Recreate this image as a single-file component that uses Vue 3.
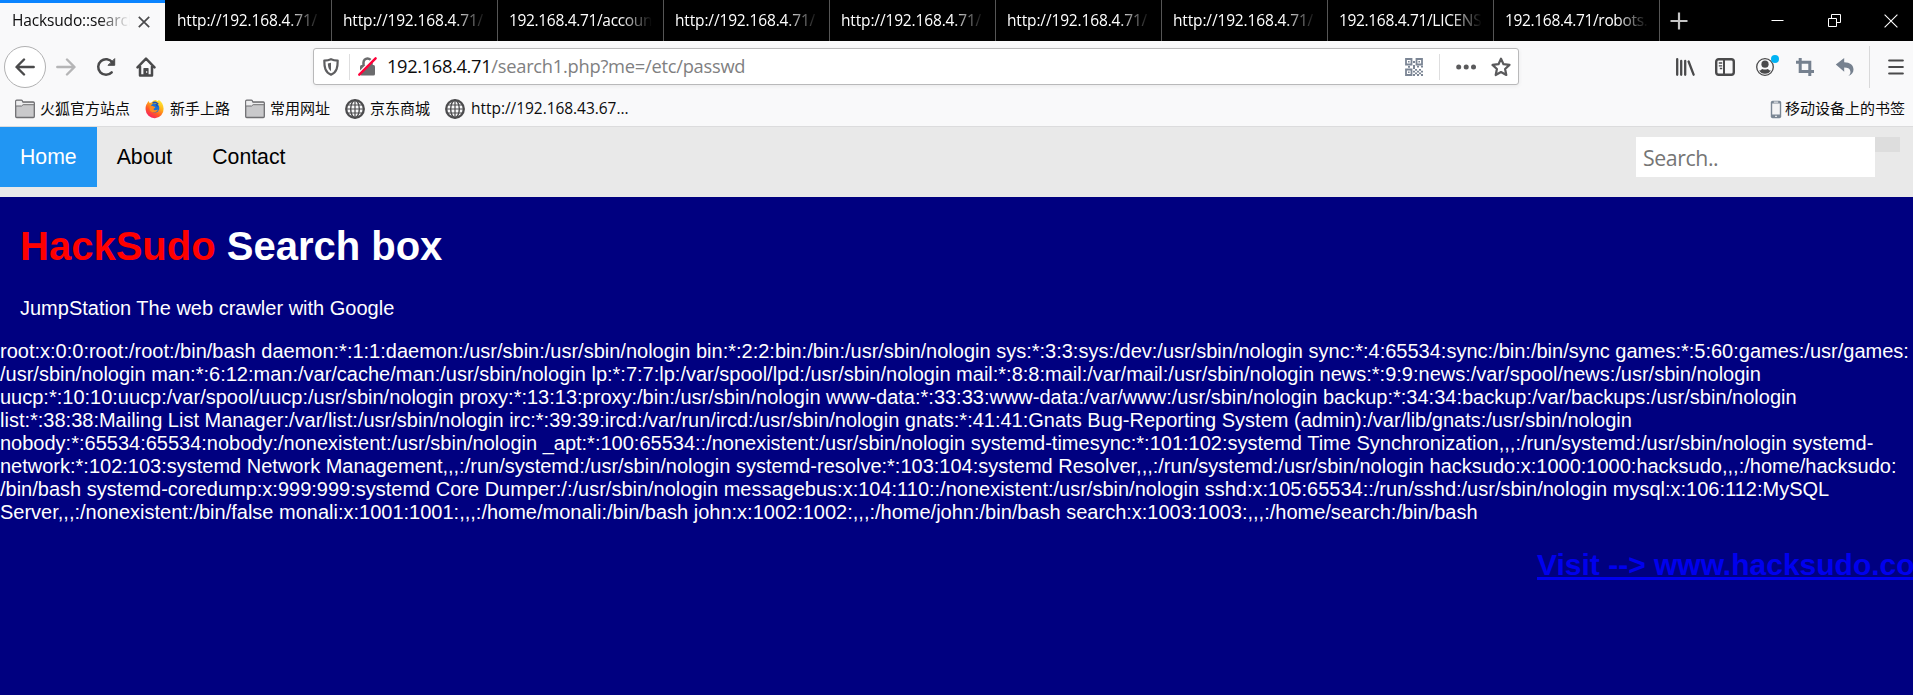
<script setup>
const tabs = [
  'http://192.168.4.71/',
  'http://192.168.4.71/',
  '192.168.4.71/account',
  'http://192.168.4.71/',
  'http://192.168.4.71/',
  'http://192.168.4.71/',
  'http://192.168.4.71/',
  '192.168.4.71/LICENSE',
  '192.168.4.71/robots.txt',
]

const bookmarks = [
  { icon: 'folder', label: '火狐官方站点' },
  { icon: 'firefox', label: '新手上路' },
  { icon: 'folder', label: '常用网址' },
  { icon: 'globe', label: '京东商城' },
  { icon: 'globe', label: 'http://192.168.43.67...', latin: true },
]

const lines = [
  'root:x:0:0:root:/root:/bin/bash daemon:*:1:1:daemon:/usr/sbin:/usr/sbin/nologin bin:*:2:2:bin:/bin:/usr/sbin/nologin sys:*:3:3:sys:/dev:/usr/sbin/nologin sync:*:4:65534:sync:/bin:/bin/sync games:*:5:60:games:/usr/games:',
  '/usr/sbin/nologin man:*:6:12:man:/var/cache/man:/usr/sbin/nologin lp:*:7:7:lp:/var/spool/lpd:/usr/sbin/nologin mail:*:8:8:mail:/var/mail:/usr/sbin/nologin news:*:9:9:news:/var/spool/news:/usr/sbin/nologin',
  'uucp:*:10:10:uucp:/var/spool/uucp:/usr/sbin/nologin proxy:*:13:13:proxy:/bin:/usr/sbin/nologin www-data:*:33:33:www-data:/var/www:/usr/sbin/nologin backup:*:34:34:backup:/var/backups:/usr/sbin/nologin',
  'list:*:38:38:Mailing List Manager:/var/list:/usr/sbin/nologin irc:*:39:39:ircd:/var/run/ircd:/usr/sbin/nologin gnats:*:41:41:Gnats Bug-Reporting System (admin):/var/lib/gnats:/usr/sbin/nologin',
  'nobody:*:65534:65534:nobody:/nonexistent:/usr/sbin/nologin _apt:*:100:65534::/nonexistent:/usr/sbin/nologin systemd-timesync:*:101:102:systemd Time Synchronization,,,:/run/systemd:/usr/sbin/nologin systemd-',
  'network:*:102:103:systemd Network Management,,,:/run/systemd:/usr/sbin/nologin systemd-resolve:*:103:104:systemd Resolver,,,:/run/systemd:/usr/sbin/nologin hacksudo:x:1000:1000:hacksudo,,,:/home/hacksudo:',
  '/bin/bash systemd-coredump:x:999:999:systemd Core Dumper:/:/usr/sbin/nologin messagebus:x:104:110::/nonexistent:/usr/sbin/nologin sshd:x:105:65534::/run/sshd:/usr/sbin/nologin mysql:x:106:112:MySQL',
  'Server,,,:/nonexistent:/bin/false monali:x:1001:1001:,,,:/home/monali:/bin/bash john:x:1002:1002:,,,:/home/john:/bin/bash search:x:1003:1003:,,,:/home/search:/bin/bash',
]
</script>

<template>
  <div class="window">
    <header class="tabbar">
      <div class="tab active">
        <span class="tab-label">Hacksudo::search</span>
        <svg class="tab-close" width="12" height="12" viewBox="0 0 12 12"><path d="M.8.8l10.4 10.4M11.2.8L.8 11.2" stroke="#4a4a4c" stroke-width="1.7" /></svg>
      </div>
      <div v-for="(t, i) in tabs" :key="i" class="tab"><span class="tab-label" :class="{ bare: !t.startsWith('http') }">{{ t }}</span></div>
      <svg class="new-tab" width="18" height="18" viewBox="0 0 18 18"><path d="M9 .5v17M.5 9h17" stroke="#c4c4c4" stroke-width="2.2" /></svg>
      <div class="controls">
        <svg width="13" height="13" viewBox="0 0 13 13"><path d="M.5 6.5h12" stroke="#fff" /></svg>
        <svg width="13" height="13" viewBox="0 0 13 13" fill="none" stroke="#fff"><path d="M.5 4.5h8v8h-8zM3.500 4V.5h9v8H9" /></svg>
        <svg width="14" height="14" viewBox="0 0 14 14"><path d="M.6.6l12.800 12.800M13.400.6L.6 13.400" stroke="#fff" stroke-width="1.100" /></svg>
      </div>
    </header>

    <div class="toolbar">
      <div class="nav-buttons">
        <div class="back">
          <svg width="20" height="20" viewBox="0 0 20 20" fill="none" stroke="#4a4a4b" stroke-width="2.400" stroke-linecap="round" stroke-linejoin="round"><path d="M18.700 10H1.800M9 2.500L1.500 10 9 17.500" /></svg>
        </div>
        <svg class="tool" width="20" height="20" viewBox="0 0 20 20" fill="none" stroke="#b5b5b6" stroke-width="2.400" stroke-linecap="round" stroke-linejoin="round"><path d="M1.300 10h16.900M11 2.500l7.500 7.500-7.500 7.500" /></svg>
        <svg class="tool" width="20" height="20" viewBox="0 0 20 20" fill="none" stroke="#4a4a4b" stroke-width="2.500" stroke-linecap="round"><path d="M15.700 15.300a7.800 7.800 0 1 1 .6-10" /><path d="M18.700 2v6.300h-6.300z" fill="#4a4a4b" stroke-width="1" stroke-linejoin="round" /></svg>
        <svg class="tool" width="20" height="20" viewBox="0 0 20 20" fill="none" stroke="#4a4a4b" stroke-width="2.500" stroke-linecap="round" stroke-linejoin="round"><path d="M1.500 10.300L10 1.700l8.500 8.600M4 9.500v9h12v-9" /><path d="M8 18v-6.500h4V18" fill="#4a4a4b" stroke-width="1.200" /><path d="M10.700 14.500v1" stroke="#f9f9fa" stroke-width="1" /></svg>
      </div>

      <div class="urlbar">
        <svg class="shield" width="16" height="18" viewBox="0 0 16 18"><path d="M8 1.200c2.300 1 4.500 1.300 6.700 1.400 0 6.500-.7 11.500-6.700 14.100C2 14.100 1.300 9.100 1.300 2.600 3.500 2.500 5.700 2.200 8 1.200z" fill="none" stroke="#5e5e60" stroke-width="2.200" stroke-linejoin="round" /><path d="M8 4.800v8.400c-2.300-1.600-3-4-3.200-7.700z" fill="#5e5e60" /></svg>
        <i class="bar"></i>
        <svg class="lock" width="19" height="19" viewBox="0 0 19 19"><path d="M5.500 9V5.500a4 4 0 0 1 8 0V9" fill="none" stroke="#6b6b6d" stroke-width="2.500" /><rect x="2" y="8" width="15" height="10.500" rx="1.500" fill="#6b6b6d" /><path d="M0 16.800L16.100.5" stroke="#fff" stroke-width="1.700" /><path d="M1.300 17.700L17.600 1.300" stroke="#ff0039" stroke-width="2.400" stroke-linecap="round" /></svg>
        <span class="url"><b>192.168.4.71</b><span>/search1.php?me=/etc/passwd</span></span>
        <svg class="qr" width="18" height="18" viewBox="0 0 18 18" fill="none" stroke="#7c8695"><path d="M1 1h5.500v5.500H1zM11.500 1H17v5.500h-5.500zM1 11.500h5.500V17H1z" stroke-width="1.800" /><path d="M3.800 3v1.600M14.200 3v1.600M3.800 13.500v1.600" stroke-width="1.600" /><path d="M8 4h2M8 8h2M3 8.800h2M8 10h2M12 8.600h2M16 8.600h2M10 11.800h2M14 11.800h2M8 13.600h2M12 13.600h2M16 13.600h2M10 15.400h2M14 15.400h2M8 17h2M12 17h2M16 17h2" stroke-width="1.800" /></svg>
        <i class="bar bar-right"></i>
        <svg class="dots" width="20" height="6" viewBox="0 0 20 6" fill="#5a5a5c"><circle cx="2.700" cy="3" r="2.500" /><circle cx="10.200" cy="3" r="2.500" /><circle cx="17.500" cy="3" r="2.500" /></svg>
        <svg class="star" width="20" height="20" viewBox="0 0 20 20"><path d="M10 1.700l2.500 5.500 6 .7-4.400 4.100 1.200 6-5.300-3-5.300 3 1.200-6L1.500 7.900l6-.7z" fill="none" stroke="#5a5a5c" stroke-width="2.200" stroke-linejoin="round" /></svg>
      </div>

      <div class="actions">
        <svg width="20" height="20" viewBox="0 0 20 20" stroke="#4a4a4b" stroke-width="2.300" stroke-linecap="round"><path d="M2.200 2.200v15.600M6.200 4v13.800M10.200 4v13.800M13.600 4.500l5 13.200" /></svg>
        <svg width="20" height="20" viewBox="0 0 20 20" fill="none" stroke="#4a4a4b"><rect x="1.200" y="2.200" width="17.600" height="15.600" rx="2.500" stroke-width="2.400" /><path d="M9 2v16" stroke-width="2" /><path d="M3.800 6h3.400M3.800 8.800h3.400M4.800 11.500h2.400" stroke-width="1.300" /></svg>
        <div class="account">
          <svg width="20" height="20" viewBox="0 0 20 20"><circle cx="10" cy="10" r="8.300" fill="none" stroke="#4a4a4b" stroke-width="1.300" /><circle cx="10" cy="7.200" r="3.600" fill="#4a4a4b" /><path d="M4 13.200c2 1.300 2-1.200 3.500-1.200 1.500.8 3.500.8 5 0 1.500 0 1.500 2.500 3.500 1.200a6.800 6.800 0 0 1-12 0z" fill="#4a4a4b" /></svg>
          <i class="badge"></i>
        </div>
        <svg width="20" height="20" viewBox="0 0 20 20" fill="none" stroke="#76818f" stroke-width="3"><path d="M1 5.200h13.800V19M5.200 1v13.600H19" /></svg>
        <svg width="20" height="20" viewBox="0 0 20 20"><path d="M.8 7.600L9.200.9v4.400c5.800 0 9.300 3 9.300 7.300 0 3-2 5.600-5.300 6.500 1.900-1.600 2.600-3.200 2.100-5.200-.6-2.200-2.600-3.300-6.100-3.300v4.100z" fill="#76818f" /></svg>
      </div>
      <i class="tool-divider"></i>
      <svg class="burger" width="16" height="16" viewBox="0 0 16 16"><path d="M1.200 1.500h13.600M1.200 8h13.600M1.200 14.500h13.600" stroke="#4a4a4b" stroke-width="2.200" stroke-linecap="round" /></svg>
    </div>

    <div class="bookmarks">
      <div v-for="(b, i) in bookmarks" :key="i" class="bookmark">
        <svg v-if="b.icon === 'folder'" width="20" height="20" viewBox="0 0 20 20"><path d="M.7 17.500V2.200q0-1 1-1h4.600q.7 0 1 .6l.6 1.200h10.400q1 0 1 1v13.500q0 1-1 1H1.700q-1 0-1-1z" fill="#c9c9cb" stroke="#6f6f72" stroke-width="1.300" /><path d="M1.300 7V2h5.200l1 2h11v1.700H8.200L6.800 7z" fill="#ededee" /><path d="M1 7h5.600l1.500-1.300H19" fill="none" stroke="#6f6f72" stroke-width="1" /></svg>
        <svg v-else-if="b.icon === 'globe'" width="20" height="20" viewBox="0 0 20 20" fill="none" stroke="#4c4c4e"><circle cx="10" cy="10" r="8.800" stroke-width="2.300" /><ellipse cx="10" cy="10" rx="4.300" ry="8.700" stroke-width="1.400" /><path d="M10 1.500v17M2.800 6h14.400M1.500 10h17M2.800 14h14.400" stroke-width="1.200" /></svg>
        <svg v-else width="20" height="20" viewBox="0 0 20 20">
          <defs>
            <linearGradient id="flame" x1=".85" y1="0" x2=".2" y2="1"><stop offset="0" stop-color="#fff23a" /><stop offset=".35" stop-color="#ffb018" /><stop offset=".65" stop-color="#ff5a25" /><stop offset="1" stop-color="#f5156c" /></linearGradient>
          </defs>
          <path d="M2.200 4.200L3.400 2l1.300 2 2.200-.7C8 1.700 9.500.9 11 1l1.300 1.200L14 1c2.400 1.500 4.500 4.500 4.600 8.800a9 9 0 0 1-18 .8C.4 8 1 5.900 2.200 4.200z" fill="url(#flame)" />
          <circle cx="9.800" cy="9" r="4.500" fill="#1671d8" />
          <path d="M4.600 7.500c1.500-1.400 3-.8 4.200.1l1.600.3-.8 1.300c-1.200.3-1.200 1.200-.5 1.700 1.400 1 2.300-.7 4-.1-1.500 3-6.500 3.600-8.300.5z" fill="#ff8a1d" />
          <path d="M7.500 4.300c1.500-1.200 3.800-1.200 5.200.3l-1.400 1 1.500 1.800" fill="none" stroke="#1c4fb0" stroke-width="1.300" />
        </svg>
        <span class="bookmark-label" :class="{ latin: b.latin }">{{ b.label }}</span>
      </div>
      <div class="bookmark mobile">
        <svg width="12" height="19" viewBox="0 0 12 19"><rect x=".8" y=".8" width="10.400" height="17.400" rx="1.800" fill="#7b8794" /><rect x="2.200" y="3.500" width="7.600" height="11" fill="#f4f4f5" /><path d="M3.800 2.100h4.400M5 16.300h2" stroke="#dfe2e5" stroke-width="1.200" /></svg>
        <span class="bookmark-label">移动设备上的书签</span>
      </div>
    </div>

    <main class="page">
      <nav class="topnav">
        <a class="current">Home</a>
        <a>About</a>
        <a>Contact</a>
        <div class="search">
          <div class="search-input">Search..</div>
          <div class="search-button"></div>
        </div>
      </nav>
      <section class="intro">
        <h1><span>HackSudo</span> Search box</h1>
        <p>JumpStation The web crawler with Google</p>
      </section>
      <div class="dump"><div v-for="(l, i) in lines" :key="i">{{ l }}</div></div>
      <h2 class="ticker"><a>Visit --&gt; www.hacksudo.com</a></h2>
    </main>
  </div>
</template>

<style>
body {
  margin: 0;
  overflow: hidden;
  background: #000080;
}
</style>

<style scoped>
.window {
  width: 1913px;
  height: 695px;
  overflow: hidden;
  display: flex;
  flex-direction: column;
  font-family: "Open Sans", "Noto Sans CJK SC", sans-serif;
}
svg {
  display: block;
  flex: none;
}
.tabbar {
  height: 41px;
  flex: none;
  background: #000;
  display: flex;
  align-items: center;
}
.tab {
  box-sizing: border-box;
  width: 166px;
  height: 41px;
  flex: none;
  padding: 0 11px 2px;
  border-right: 1px solid #555;
  display: flex;
  align-items: center;
  color: #fff;
  font-size: 15.500px;
}
.tab-label {
  flex: 1;
  overflow: hidden;
  white-space: nowrap;
  letter-spacing: -0.15px;
  line-height: 24px;
  -webkit-mask-image: linear-gradient(to left, transparent, #000 32px);
  mask-image: linear-gradient(to left, transparent, #000 32px);
}
.tab-label.bare {
  letter-spacing: -0.33px;
}
.tab.active {
  width: 165px;
  margin-right: 1px;
  border-right: 0;
  border-top: 3px solid #0a84ff;
  padding: 0 15px 5px 12px;
  background: #f9f9fa;
  color: #0c0c0d;
}
.tab.active .tab-label {
  margin-right: 8px;
}
.tab-close {
  position: relative;
  top: 2px;
}
.new-tab {
  margin-left: 10px;
}
.controls {
  margin-left: auto;
  margin-right: 15px;
  display: flex;
  align-items: center;
  gap: 43.500px;
}
.toolbar {
  height: 51px;
  flex: none;
  background: #f9f9fa;
  display: flex;
  align-items: center;
}
.nav-buttons {
  width: 313px;
  display: flex;
  align-items: center;
}
.back {
  box-sizing: border-box;
  width: 42px;
  height: 42px;
  margin: 0 10px 0 4px;
  border: 1px solid #b1b1b2;
  border-radius: 50%;
  background: #fff;
  display: flex;
  align-items: center;
  justify-content: center;
}
.tool {
  margin-right: 20px;
}
.urlbar {
  box-sizing: border-box;
  width: 1206px;
  height: 37px;
  border: 1px solid #b9b9ba;
  border-radius: 3px;
  background: #fff;
  box-shadow: 0 1px 4px rgba(0, 0, 0, 0.07);
  display: flex;
  align-items: center;
}
.shield {
  margin-left: 9px;
}
.bar {
  width: 1px;
  height: 26px;
  margin: 0 8px 0 10px;
  background: #dededf;
}
.url {
  margin-left: 10px;
  padding-bottom: 2px;
  flex: 1;
  font-size: 18.300px;
  line-height: 26px;
  letter-spacing: -0.25px;
  color: #808081;
  white-space: nowrap;
}
.url b {
  font-weight: 400;
  color: #0c0c0d;
  letter-spacing: -0.35px;
}
.bar-right {
  margin: 0 16px;
}
.star {
  margin: 0 7px 0 15px;
}
.actions {
  margin-left: 156px;
  display: flex;
  gap: 20px;
}
.account {
  position: relative;
}
.badge {
  position: absolute;
  left: 16px;
  top: -2px;
  width: 8px;
  height: 8px;
  border-radius: 50%;
  background: #00b3f4;
}
.tool-divider {
  width: 1px;
  height: 42px;
  margin: 0 18px 0 14px;
  background: #d9d9da;
}
.bookmarks {
  box-sizing: border-box;
  height: 35px;
  flex: none;
  padding: 0 8px 0 15px;
  background: #f9f9fa;
  border-bottom: 1px solid #dcdcdd;
  display: flex;
  align-items: center;
  gap: 15px;
  color: #0c0c0d;
  font-size: 15px;
  line-height: 22px;
}
.bookmark {
  display: flex;
  align-items: center;
  gap: 5px;
  white-space: nowrap;
}
.bookmark-label {
  padding-bottom: 2px;
}
.latin {
  margin-left: 1px;
  font-size: 15.500px;
  letter-spacing: -0.05px;
}
.mobile {
  margin-left: auto;
  gap: 3px;
}
.page {
  flex: 1;
  background: #000080;
  color: #fff;
  font: 20px/23px "Liberation Sans", Arial, sans-serif;
  overflow: hidden;
}
.topnav {
  height: 70px;
  background: #e9e9e9;
  display: flex;
  align-items: flex-start;
  color: #000;
  font-size: 21.250px;
}
.topnav a {
  padding: 17.500px 20px;
  line-height: 25px;
}
.topnav .current {
  background: #2196f3;
  color: #fff;
}
.search {
  margin: 10px 13px 0 auto;
  display: flex;
  align-items: flex-start;
}
.search-input {
  box-sizing: border-box;
  width: 239px;
  height: 40px;
  padding-left: 7px;
  background: #fff;
  color: #757575;
  font: 21.250px/42px "Open Sans", sans-serif;
  letter-spacing: -0.4px;
}
.search-button {
  width: 25px;
  height: 15px;
  background: #ddd;
}
.intro {
  padding: 26px 20px 0;
}
h1 {
  margin: 0 0 28px;
  font-size: 40px;
  line-height: 46px;
}
h1 span {
  color: #f00;
}
.intro p {
  margin: 0 0 20px;
}
.dump {
  white-space: nowrap;
}
.ticker {
  margin: 24px 0 0 1537px;
  font-size: 30px;
  line-height: 34px;
  white-space: nowrap;
}
.ticker a {
  color: #00e;
  text-decoration: underline;
}
</style>
